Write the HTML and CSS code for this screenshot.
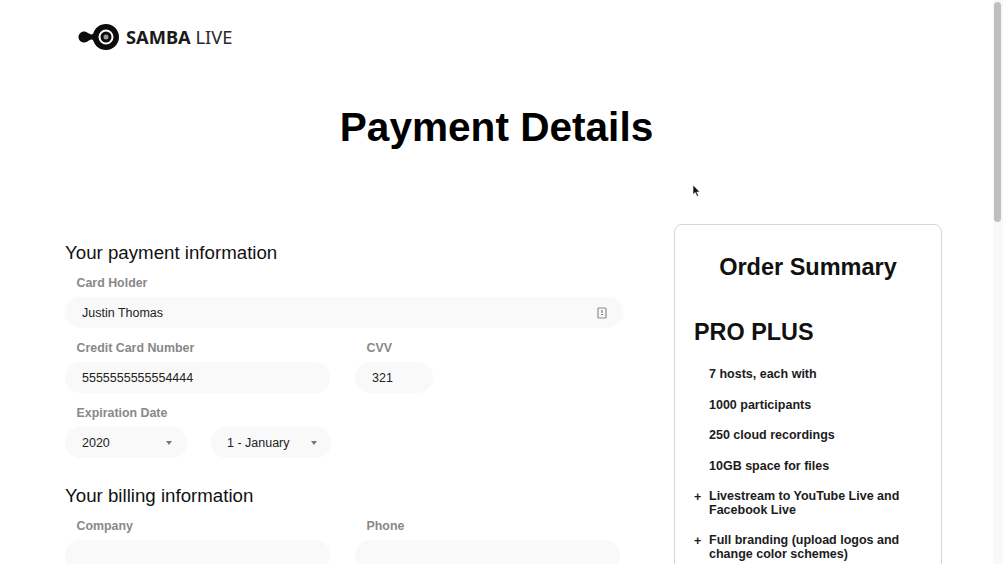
FILE: index.html
```html
<!DOCTYPE html>
<html lang="en">
<head>
    <meta charset="UTF-8">
    <meta name="viewport" content="width=device-width, initial-scale=1.0">
    <title>Payment Details</title>
    <link rel="stylesheet" href="styles.css">
</head>
<body>
    <div class="page">
        <header class="brand">
            <svg class="brand-mark" width="42" height="26" viewBox="0 0 42 26">
                <path d="M6 7.5c2.5 0 3.8 1.5 6 2.5 1.500.7 2.500.5 3.200-.5C17 4 21.500 0 28 0c7.200 0 13 5.800 13 13s-5.800 13-13 13c-6.500 0-11-4-12.800-9.500-.7-1-1.700-1.200-3.200-.5-2.200 1-3.500 2.500-6 2.500-3 0-5.500-2.500-5.500-5.500S3 7.500 6 7.500z" fill="#0c0c0c"/>
                <circle cx="28" cy="13" r="6.5" fill="none" stroke="#fff" stroke-width="2"/>
                <circle cx="28" cy="13" r="2.5" fill="#9a9a9a"/>
            </svg>
            <span class="brand-name"><b>SAMBA</b> LIVE</span>
        </header>

        <h1 class="page-title">Payment Details</h1>

        <div class="columns">
            <form class="payment-form">
                <h2>Your payment information</h2>
                <div class="field">
                    <label>Card Holder</label>
                    <div class="pill wide">
                        <span>Justin Thomas</span>
                        <svg class="card-icon" width="10" height="12" viewBox="0 0 10 12">
                            <rect x="1" y="1" width="8" height="10" rx="1" fill="none" stroke="#8d8d8d" stroke-width="1.2"/>
                            <path d="M5 3v3M4 7.5h2" stroke="#777" stroke-width="1.2"/>
                        </svg>
                    </div>
                </div>
                <div class="row">
                    <div class="field card-col">
                        <label>Credit Card Number</label>
                        <div class="pill"><span>5555555555554444</span></div>
                    </div>
                    <div class="field">
                        <label>CVV</label>
                        <div class="pill cvv"><span>321</span></div>
                    </div>
                </div>
                <div class="field">
                    <label>Expiration Date</label>
                    <div class="selects">
                        <div class="pill year"><span>2020</span><i class="caret"></i></div>
                        <div class="pill month"><span>1 - January</span><i class="caret"></i></div>
                    </div>
                </div>

                <h2 class="billing">Your billing information</h2>
                <div class="row">
                    <div class="field card-col">
                        <label>Company</label>
                        <div class="pill"></div>
                    </div>
                    <div class="field phone-col">
                        <label>Phone</label>
                        <div class="pill"></div>
                    </div>
                </div>
            </form>

            <aside class="summary">
                <h3>Order Summary</h3>
                <h4>PRO PLUS</h4>
                <ul>
                    <li>7 hosts, each with</li>
                    <li>1000 participants</li>
                    <li>250 cloud recordings</li>
                    <li>10GB space for files</li>
                    <li class="extra">Livestream to YouTube Live and Facebook Live</li>
                    <li class="extra">Full branding (upload logos and change color schemes)</li>
                </ul>
            </aside>
        </div>

        <svg class="pointer" width="9" height="14" viewBox="0 0 9 14">
            <path d="M1 1v9.500l2.300-2 1.700 4 1.500-.7-1.700-3.800h3z" fill="#111" stroke="#fff" stroke-width=".6"/>
        </svg>
    </div>
    <div class="scrollbar"><div class="thumb"></div></div>
</body>
</html>
```

FILE: styles.css
```css
html, body {
    height: 100%;
    margin: 0;
    overflow: hidden;
}
body {
    font-family: "Liberation Sans", Arial, sans-serif;
    background-color: #fff;
    color: #111;
}
.page {
    width: 993px;
    position: relative;
}
.brand {
    display: flex;
    align-items: center;
    height: 26px;
    padding: 24px 0 0 78px;
}
.brand-mark {
    margin-right: 6px;
}
.brand-name {
    font-family: "Noto Sans", sans-serif;
    font-size: 18.3px;
    line-height: 26px;
    color: #2a2a2a;
}
.brand-name b {
    color: #1a1a1a;
}
.page-title {
    margin: 0;
    padding-top: 50px;
    font-size: 40.6px;
    line-height: 54px;
    text-align: center;
    color: #000;
}
.columns {
    display: flex;
    align-items: flex-start;
    padding: 70px 0 0 65px;
}
.payment-form {
    width: 609px;
    flex: none;
    padding-top: 19px;
}
h2 {
    margin: 0;
    font-size: 18.7px;
    font-weight: normal;
    line-height: 20px;
    color: #111;
}
.billing {
    margin-top: 28px;
}
.field {
    margin-top: 13px;
}
.field label {
    display: block;
    padding-left: 11.5px;
    margin-bottom: 7px;
    font-size: 12.4px;
    font-weight: bold;
    line-height: 14px;
    color: #888;
}
.row {
    display: flex;
}
.card-col {
    width: 290px;
}
.phone-col {
    width: 265px;
}
.pill {
    display: flex;
    align-items: center;
    justify-content: space-between;
    box-sizing: border-box;
    height: 31px;
    padding: 0 16px 0 17px;
    border-radius: 15px;
    background-color: #f9f9f9;
    font-size: 12.5px;
    color: #222;
}
.card-col .pill {
    width: 265px;
}
.wide {
    width: 558px;
}
.cvv {
    width: 78px;
}
.selects {
    display: flex;
    gap: 24px;
}
.year {
    width: 122px;
    padding-right: 15px;
}
.month {
    width: 120px;
    padding: 0 14px 0 16px;
}
.caret {
    width: 0;
    height: 0;
    border-left: 3px solid transparent;
    border-right: 3px solid transparent;
    border-top: 4px solid #777;
}
.summary {
    box-sizing: border-box;
    width: 268px;
    height: 400px;
    padding: 28px 19px 0 19px;
    border: 1.5px solid #d6d6d6;
    border-radius: 8px;
}
h3 {
    margin: 0;
    font-size: 23.5px;
    line-height: 28px;
    text-align: center;
    color: #111;
}
h4 {
    margin: 37px 0 0;
    font-size: 23.4px;
    line-height: 28px;
    color: #111;
}
.summary ul {
    margin: 22px 0 0;
    padding: 0;
    list-style: none;
}
.summary li {
    position: relative;
    margin-bottom: 17px;
    padding-left: 15px;
    padding-right: 12px;
    font-size: 12.5px;
    font-weight: bold;
    line-height: 13.5px;
    color: #1c1c1c;
}
.extra::before {
    content: "+";
    position: absolute;
    left: 0;
    top: 1px;
}
.pointer {
    position: absolute;
    left: 692px;
    top: 184px;
}
.scrollbar {
    position: fixed;
    top: 0;
    right: 0;
    bottom: 0;
    width: 10px;
    background-color: #f8f8f8;
}
.thumb {
    width: 7px;
    height: 220px;
    margin: 2px 0 0 1px;
    border-radius: 4px;
    background-color: #bfbfbf;
}
```
